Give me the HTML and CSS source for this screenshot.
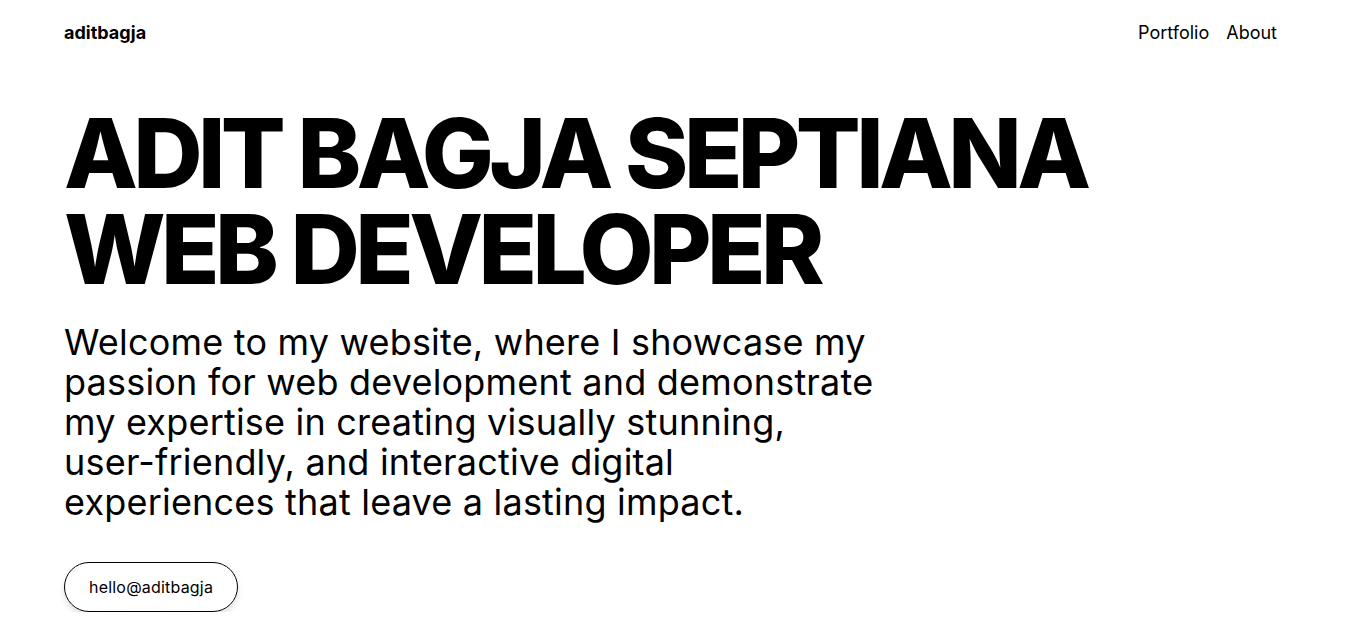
FILE: index.html
```html
<!DOCTYPE html>
<html lang="en">
<head>
<meta charset="utf-8">
<title>aditbagja</title>
<link rel="stylesheet" href="styles.css">
</head>
<body>
<header class="header">
  <a class="brand" href="#">aditbagja</a>
  <nav class="nav">
    <a href="#">Portfolio</a>
    <a href="#">About</a>
  </nav>
</header>
<main class="hero">
  <h1 class="title">ADIT BAGJA SEPTIANA<br>WEB DEVELOPER</h1>
  <p class="intro">Welcome to my website, where I showcase my passion for web development and demonstrate my expertise in creating visually stunning, <span class="nowrap">user-friendly,</span> and interactive digital experiences that leave a lasting impact.</p>
  <a class="contact" href="#">hello@aditbagja</a>
</main>
</body>
</html>
```
FILE: styles.css
```css
* { box-sizing: border-box; }
html, body { margin: 0; padding: 0; }
body {
  font-family: Inter, "Noto Sans", sans-serif;
  color: #000;
  background: #fff;
}
a { color: inherit; text-decoration: none; }
.header {
  height: 64px;
  display: flex;
  align-items: center;
  justify-content: space-between;
  padding: 0 71px 0 64px;
}
.brand {
  font-weight: 700;
  font-size: 18px;
}
.nav {
  display: flex;
  gap: 17px;
  font-size: 18px;
}
.hero {
  padding: 41px 64px 0;
}
.title {
  margin: 0;
  font-size: 96px;
  line-height: 1;
  font-weight: 800;
  letter-spacing: -0.048em;
}
.intro {
  margin: 25px 0 40px;
  max-width: 820px;
  font-size: 36px;
  line-height: 40px;
  letter-spacing: 0.2px;
}
.nowrap { white-space: nowrap; }
.contact {
  display: inline-block;
  padding: 12px 24px;
  border: 1px solid #000;
  border-radius: 999px;
  font-size: 16px;
  line-height: 24px;
  letter-spacing: 0.2px;
  box-shadow: 0 4px 6px rgba(0,0,0,0.12);
}
```
